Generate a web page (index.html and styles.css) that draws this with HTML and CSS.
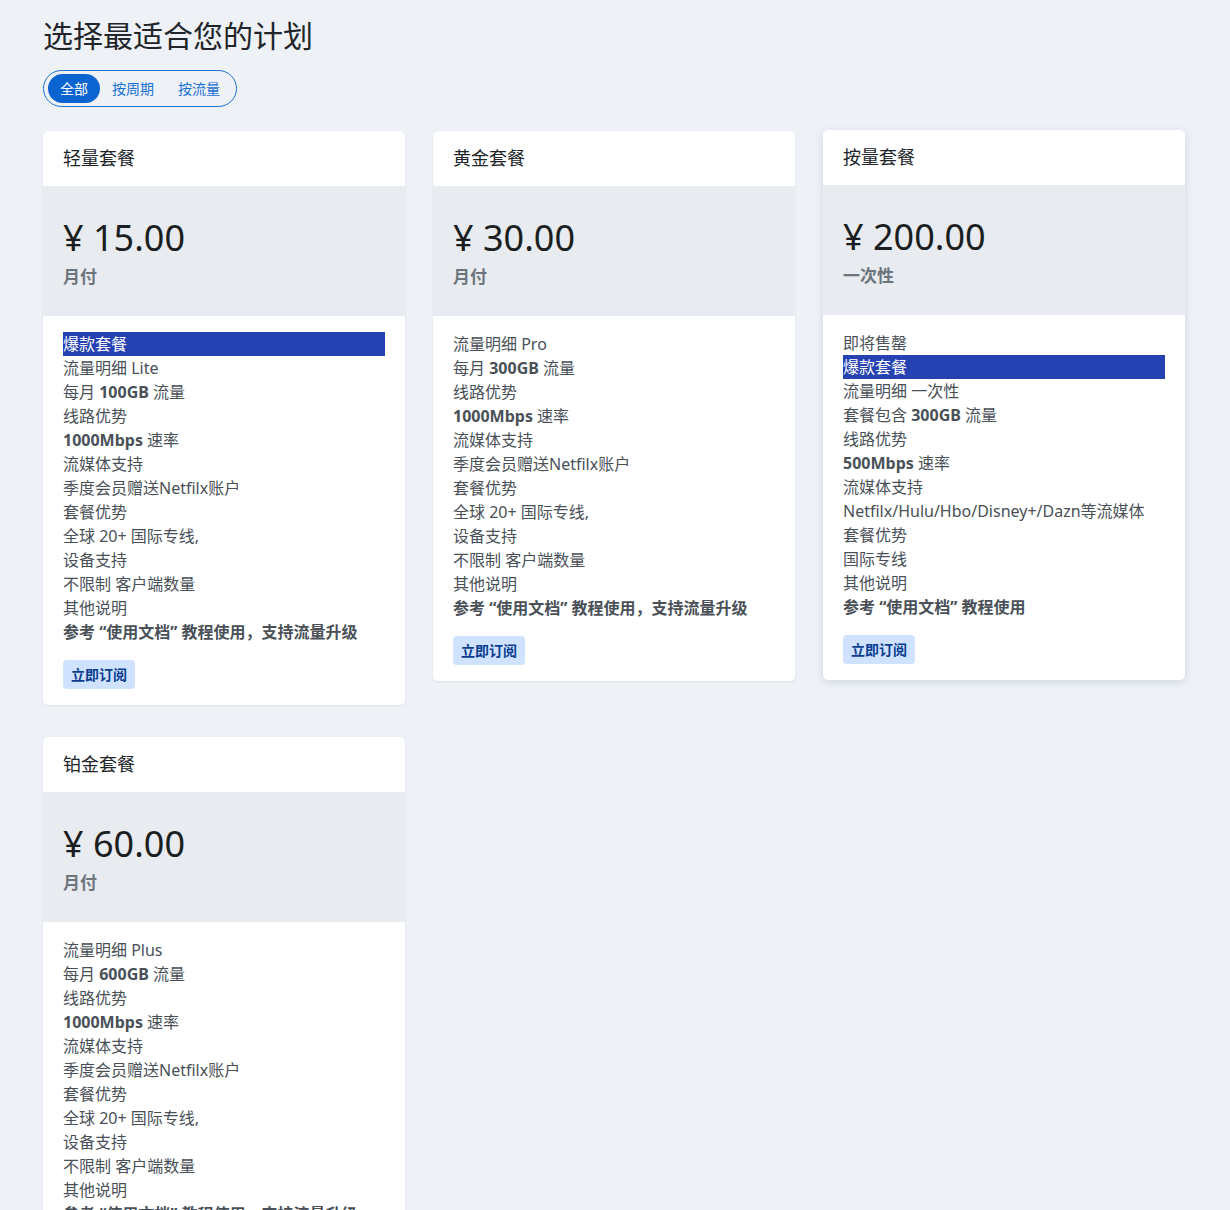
FILE: index.html
```html
<!DOCTYPE html>
<html>

<head>
  <meta charset="utf-8">
  <meta name="viewport" content="width=device-width, initial-scale=1">
  <title>选择最适合您的计划</title>
  <link rel="stylesheet" href="styles.css">
</head>

<body>
  <div class="page">
    <h1 class="title">选择最适合您的计划</h1>
    <div class="filter">
      <button class="filter-btn active">全部</button>
      <button class="filter-btn">按周期</button>
      <button class="filter-btn">按流量</button>
    </div>

    <div class="plans">
      <div class="plan">
        <div class="plan-head">轻量套餐</div>
        <div class="plan-price">
          <div class="amount">¥ 15.00</div>
          <div class="period">月付</div>
        </div>
        <div class="plan-body">
          <div class="hot">爆款套餐</div>
          <div>流量明细 Lite</div>
          <div>每月 <strong>100GB</strong> 流量</div>
          <div>线路优势</div>
          <div><strong>1000Mbps</strong> 速率</div>
          <div>流媒体支持</div>
          <div>季度会员赠送Netfilx账户</div>
          <div>套餐优势</div>
          <div>全球 20+ 国际专线,</div>
          <div>设备支持</div>
          <div>不限制 客户端数量</div>
          <div>其他说明</div>
          <div><strong>参考 “使用文档” 教程使用，支持流量升级</strong></div>
          <button class="btn">立即订阅</button>
        </div>
      </div>

      <div class="plan">
        <div class="plan-head">黄金套餐</div>
        <div class="plan-price">
          <div class="amount">¥ 30.00</div>
          <div class="period">月付</div>
        </div>
        <div class="plan-body">
          <div>流量明细 Pro</div>
          <div>每月 <strong>300GB</strong> 流量</div>
          <div>线路优势</div>
          <div><strong>1000Mbps</strong> 速率</div>
          <div>流媒体支持</div>
          <div>季度会员赠送Netfilx账户</div>
          <div>套餐优势</div>
          <div>全球 20+ 国际专线,</div>
          <div>设备支持</div>
          <div>不限制 客户端数量</div>
          <div>其他说明</div>
          <div><strong>参考 “使用文档” 教程使用，支持流量升级</strong></div>
          <button class="btn">立即订阅</button>
        </div>
      </div>

      <div class="plan raised">
        <div class="plan-head">按量套餐</div>
        <div class="plan-price">
          <div class="amount">¥ 200.00</div>
          <div class="period">一次性</div>
        </div>
        <div class="plan-body">
          <div>即将售罄</div>
          <div class="hot">爆款套餐</div>
          <div>流量明细 一次性</div>
          <div>套餐包含 <strong>300GB</strong> 流量</div>
          <div>线路优势</div>
          <div><strong>500Mbps</strong> 速率</div>
          <div>流媒体支持</div>
          <div>Netfilx/Hulu/Hbo/Disney+/Dazn等流媒体</div>
          <div>套餐优势</div>
          <div>国际专线</div>
          <div>其他说明</div>
          <div><strong>参考 “使用文档” 教程使用</strong></div>
          <button class="btn">立即订阅</button>
        </div>
      </div>

      <div class="plan">
        <div class="plan-head">铂金套餐</div>
        <div class="plan-price">
          <div class="amount">¥ 60.00</div>
          <div class="period">月付</div>
        </div>
        <div class="plan-body">
          <div>流量明细 Plus</div>
          <div>每月 <strong>600GB</strong> 流量</div>
          <div>线路优势</div>
          <div><strong>1000Mbps</strong> 速率</div>
          <div>流媒体支持</div>
          <div>季度会员赠送Netfilx账户</div>
          <div>套餐优势</div>
          <div>全球 20+ 国际专线,</div>
          <div>设备支持</div>
          <div>不限制 客户端数量</div>
          <div>其他说明</div>
          <div><strong>参考 “使用文档” 教程使用，支持流量升级</strong></div>
          <button class="btn">立即订阅</button>
        </div>
      </div>
    </div>
  </div>
</body>

</html>
```

FILE: styles.css
```css
body {
  margin: 0;
  background: #eef2f7;
  font-family: "Noto Sans", "Noto Sans CJK SC", sans-serif;
  color: #212529;
}

.page {
  padding: 18px 43px 40px 43px;
  width: 1143px;
}

.title {
  margin: 0;
  font-size: 30px;
  font-weight: 400;
  line-height: 36px;
}

.filter {
  display: inline-flex;
  margin-top: 16px;
  padding: 3px 4px;
  border: 1px solid #1a6fd6;
  border-radius: 20px;
}

.filter-btn {
  border: none;
  background: none;
  color: #1a6fd6;
  font-family: inherit;
  font-size: 14px;
  line-height: 29px;
  padding: 0 12px;
  border-radius: 15px;
  cursor: pointer;
}

.filter-btn.active {
  background: #0b64cf;
  color: #fff;
}

.plans {
  display: grid;
  grid-template-columns: repeat(3, 362px);
  column-gap: 28px;
  row-gap: 32px;
  align-items: start;
  margin-top: 24px;
}

.plan {
  background: #fff;
  border-radius: 5px;
  overflow: hidden;
  box-shadow: 0 1px 3px rgba(30, 50, 90, 0.08);
}

.plan.raised {
  transform: translateY(-1px);
  box-shadow: 0 2px 8px rgba(30, 50, 90, 0.14);
}

.plan-head {
  padding: 0 20px;
  font-size: 18px;
  line-height: 55px;
}

.plan-price {
  background: #e8ebef;
  padding: 29px 20px 28px 20px;
}

.amount {
  font-size: 36px;
  line-height: 46px;
  color: #1b1e21;
}

.period {
  margin-top: 4px;
  font-size: 17px;
  font-weight: 700;
  line-height: 23px;
  color: #6c757d;
}

.plan-body {
  padding: 16px 20px;
  font-size: 16px;
  line-height: 24px;
  color: #495057;
}

.plan-body strong {
  font-weight: 700;
}

.hot {
  background: #2541b2;
  color: #fff;
}

.btn {
  display: block;
  margin-top: 16px;
  border: none;
  border-radius: 4px;
  background: #cfe2ff;
  color: #0a3d8f;
  font-family: inherit;
  font-size: 14px;
  font-weight: 700;
  line-height: 21px;
  padding: 4px 8px;
  cursor: pointer;
}
```
